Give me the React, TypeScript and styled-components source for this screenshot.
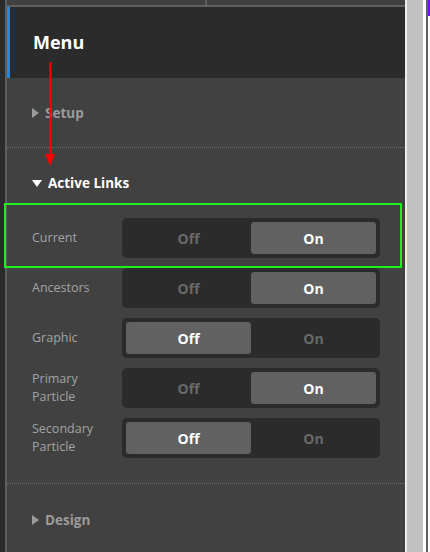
import React from "react";
import styled, { createGlobalStyle } from "styled-components";

const Global = createGlobalStyle`
  html, body { margin: 0; padding: 0; background: #ffffff; }
  body { font-family: "Open Sans", "Noto Sans", sans-serif; }
  #root { width: 430px; height: 552px; overflow: hidden; }
`;

const Frame = styled.div`
  position: relative;
  display: flex;
  width: 430px;
  height: 552px;
  overflow: hidden;
`;

const Gutter = styled.div`
  width: 5px;
  background: #2b2b2b;
  flex: none;
`;

const Panel = styled.div`
  width: 398px;
  flex: none;
  border-left: 2px solid #5f5f5f;
  background: #414141;
  display: flex;
  flex-direction: column;
  overflow: hidden;
`;

const Tabs = styled.div`
  display: flex;
  height: 5px;
  border-bottom: 2px solid #5f5f5f;
  flex: none;
`;

const Tab = styled.div<{ $w?: number }>`
  background: #404040;
  flex: ${(p) => (p.$w ? `0 0 ${p.$w}px` : "1")};
  & + & { border-left: 2px solid #5f5f5f; }
`;

const Header = styled.div`
  height: 71px;
  flex: none;
  background: #2b2b2b;
  border-left: 3px solid #1e88e5;
  display: flex;
  align-items: center;
  padding-left: 23px;
  color: #ffffff;
  font-size: 18px;
  font-weight: 700;
  padding-bottom: 2px;
  box-sizing: border-box;
`;

const Section = styled.div<{ $h?: number }>`
  border-bottom: 1px dotted #6e6e6e;
  ${(p) => (p.$h ? `height: ${p.$h}px;` : "")}
  box-sizing: border-box;
  flex: none;
`;

const SectionTitle = styled.div<{ $open?: boolean; $h: number }>`
  height: ${(p) => p.$h}px;
  flex: none;
  display: flex;
  align-items: center;
  padding-left: 25px;
  gap: 6px;
  font-size: 13.5px;
  font-weight: 700;
  color: ${(p) => (p.$open ? "#ffffff" : "#9b9b9b")};
`;

const Caret = styled.span<{ $open?: boolean }>`
  display: inline-block;
  width: 0;
  height: 0;
  ${(p) =>
    p.$open
      ? `border-left: 5px solid transparent; border-right: 5px solid transparent; border-top: 7px solid #ffffff; margin-top: 1px;`
      : `border-top: 5px solid transparent; border-bottom: 5px solid transparent; border-left: 7px solid #9b9b9b;`}
`;

const Rows = styled.div`
  display: flex;
  flex-direction: column;
  gap: 10px;
  padding-bottom: 25px;
`;

const Row = styled.div`
  display: flex;
  align-items: center;
  height: 40px;
  padding-left: 25px;
`;

const Label = styled.div`
  width: 90px;
  font-size: 12.5px;
  line-height: 18px;
  color: #a3a3a3;
`;

const Segmented = styled.div`
  width: 258px;
  height: 40px;
  box-sizing: border-box;
  padding: 4px;
  border-radius: 5px;
  background: #2b2b2b;
  display: flex;
`;

const Segment = styled.div<{ $active?: boolean }>`
  flex: 1;
  border-radius: 3px;
  display: flex;
  align-items: center;
  justify-content: center;
  font-size: 14px;
  font-weight: 700;
  background: ${(p) => (p.$active ? "#616161" : "transparent")};
  color: ${(p) => (p.$active ? "#ffffff" : "#696969")};
`;

const Scroll = styled.div`
  display: flex;
  flex: none;
  width: 25px;
`;

const ScrollPart = styled.div<{ $w: number; $bg: string }>`
  width: ${(p) => p.$w}px;
  background: ${(p) => p.$bg};
  flex: none;
`;

const EdgeStrip = styled.div`
  width: 2px;
  flex: none;
  background: linear-gradient(#7a0ff0 0 16px, #ffffff 16px);
`;

const Highlight = styled.div`
  position: absolute;
  left: 4px;
  top: 203px;
  width: 394px;
  height: 61px;
  border: 2px solid #1ef01e;
  pointer-events: none;
`;

const Arrow = styled.svg`
  position: absolute;
  left: 40px;
  top: 60px;
  pointer-events: none;
`;

type R = { label: React.ReactNode; on: boolean };
const rows: R[] = [
  { label: "Current", on: true },
  { label: "Ancestors", on: true },
  { label: "Graphic", on: false },
  { label: <>Primary<br />Particle</>, on: true },
  { label: <>Secondary<br />Particle</>, on: false },
];

export default function App() {
  return (
    <>
      <Global />
      <Frame>
        <Gutter />
        <Panel>
          <Tabs>
            <Tab $w={198} />
            <Tab />
          </Tabs>
          <Header>Menu</Header>
          <Section $h={70}>
            <SectionTitle $h={69}>
              <Caret />
              Setup
            </SectionTitle>
          </Section>
          <Section>
            <SectionTitle $open $h={70}>
              <Caret $open />
              Active Links
            </SectionTitle>
            <Rows>
              {rows.map((r, i) => (
                <Row key={i}>
                  <Label>{r.label}</Label>
                  <Segmented>
                    <Segment $active={!r.on}>Off</Segment>
                    <Segment $active={r.on}>On</Segment>
                  </Segmented>
                </Row>
              ))}
            </Rows>
          </Section>
          <SectionTitle $h={72}>
            <Caret />
            Design
          </SectionTitle>
        </Panel>
        <Scroll>
          <ScrollPart $w={2} $bg="#ececec" />
          <ScrollPart $w={16} $bg="#c1c1c1" />
          <ScrollPart $w={3} $bg="#ffffff" />
          <ScrollPart $w={2} $bg="#5f5f5f" />
          <EdgeStrip />
        </Scroll>
        <Highlight />
        <Arrow width="20" height="110" viewBox="0 0 20 110">
          <line x1="10.5" y1="2" x2="10.5" y2="96" stroke="#ff0000" strokeWidth="2" />
          <polygon points="5,94 15,94 10,106" fill="#ff0000" />
        </Arrow>
      </Frame>
    </>
  );
}
